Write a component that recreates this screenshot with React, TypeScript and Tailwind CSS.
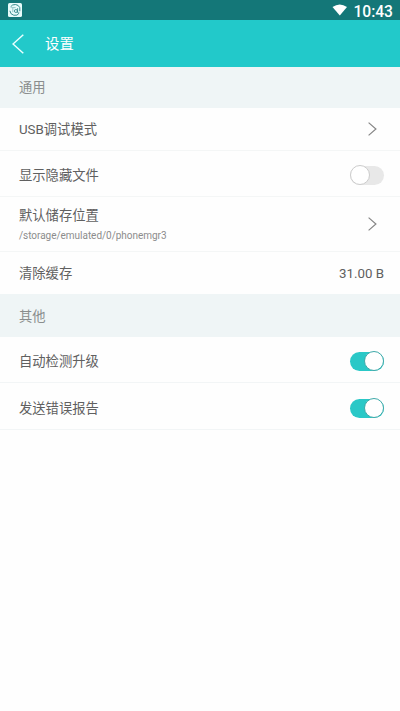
import { useState } from "react";
import type { ReactNode } from "react";
import clsx from "clsx";

function StatusBar() {
  return (
    <div className="flex h-5 items-center justify-between bg-[#147778] pl-2 pr-[7px] text-white">
      {/* Running app notification */}
      <svg width="14" height="14" viewBox="0 0 14 14" fill="none">
        <rect width="14" height="14" rx="1.6" fill="#e8fbfa" />
        <path d="M1.9 7.8a5.1 5.1 0 0 0 9.4 2.2M2.6 3.8a5.3 5.3 0 0 1 9.2.8v3.6" stroke="#247e80" strokeWidth=".9" />
        <path d="M3.2 4.6h4.4M4.8 5v4.2" stroke="#7fb9ba" strokeWidth=".8" />
        <circle cx="7.9" cy="8" r="1.5" stroke="#247e80" strokeWidth=".8" />
        <path d="M9.6 5.2v4.4h1" stroke="#247e80" strokeWidth=".8" />
      </svg>
      <div className="flex items-center gap-[6px]">
        <svg width="15" height="12" viewBox="0 0 15 12">
          <path d="M7.8 11.4.5 3Q7.8-2.2 15 3Z" fill="white" />
        </svg>
        <span className="mt-[3px] font-['Roboto',sans-serif] text-[15.6px] font-medium leading-5">10:43</span>
      </div>
    </div>
  );
}

function Header() {
  return (
    <header className="flex h-[47px] items-center bg-[#22c9ca] pl-3 text-white">
      <svg width="12" height="20" viewBox="0 0 12 20" fill="none">
        <path d="M11.3.7 1 10l10.3 9.3" stroke="#eaffff" strokeWidth="1.5" />
      </svg>
      <h1 className="ml-[21px] mt-[3px] text-[14.4px] leading-5">设置</h1>
    </header>
  );
}

function SectionTitle({ className, children }: { className: string; children: ReactNode }) {
  return (
    <h2 className={clsx("flex items-center bg-[#eff5f6] pl-[19px] text-[13.3px] text-[#8a8d8d]", className)}>
      {children}
    </h2>
  );
}

function Row({
  label,
  detail,
  className,
  children,
}: {
  label: string;
  detail?: string;
  className: string;
  children: ReactNode;
}) {
  return (
    <div className={clsx("flex items-center justify-between pl-[19px] pr-4", className)}>
      <div>
        <p className="text-[13.3px] leading-5">{label}</p>
        {detail && <p className="mt-[2px] text-[10px] leading-4 tracking-[-0.03px] text-[#8c8c8c]">{detail}</p>}
      </div>
      {children}
    </div>
  );
}

function Chevron() {
  return (
    <svg width="9" height="14" viewBox="0 0 9 14" fill="none" className="mb-[2px] mr-[7px]">
      <path d="m.6.6 7.3 6.4-7.3 6.4" stroke="#858585" strokeWidth="1.2" />
    </svg>
  );
}

function Toggle({ defaultOn = false }: { defaultOn?: boolean }) {
  const [on, setOn] = useState(defaultOn);

  return (
    <button
      type="button"
      role="switch"
      aria-checked={on}
      onClick={() => setOn(!on)}
      className={clsx(
        "mb-px flex h-[19px] w-[34px] items-center rounded-full",
        on ? "justify-end bg-[#2ac8c7]" : "justify-start bg-[#e8e8e8]",
      )}
    >
      <span
        className={clsx(
          "-my-px size-5 shrink-0 rounded-full border bg-white",
          on ? "border-[#3fa9a9]" : "border-[#cccccc]",
        )}
      />
    </button>
  );
}

export default function App() {
  return (
    <main className="min-h-[711px] bg-[#fefefe] font-['Roboto','Noto_Sans_CJK_SC',sans-serif] text-[#606060]">
      <StatusBar />
      <Header />

      <SectionTitle className="h-[41px]">通用</SectionTitle>
      <Row label="USB调试模式" className="h-[43px] border-b border-[#f4f6f6] pt-px">
        <Chevron />
      </Row>
      <Row label="显示隐藏文件" className="h-[46px] border-b border-[#f4f6f6] pt-1">
        <Toggle />
      </Row>
      <Row label="默认储存位置" detail="/storage/emulated/0/phonemgr3" className="h-[55px] border-b border-[#f4f6f6] pt-px">
        <Chevron />
      </Row>
      <Row label="清除缓存" className="h-[42px] pt-px">
        <span className="text-[13.3px]">31.00 B</span>
      </Row>

      <SectionTitle className="h-[43px] pt-[2px]">其他</SectionTitle>
      <Row label="自动检测升级" className="h-[46px] border-b border-[#f2f5f6] pt-1">
        <Toggle defaultOn />
      </Row>
      <Row label="发送错误报告" className="h-[47px] border-b border-[#f2f5f6] pt-[5px]">
        <Toggle defaultOn />
      </Row>
    </main>
  );
}
